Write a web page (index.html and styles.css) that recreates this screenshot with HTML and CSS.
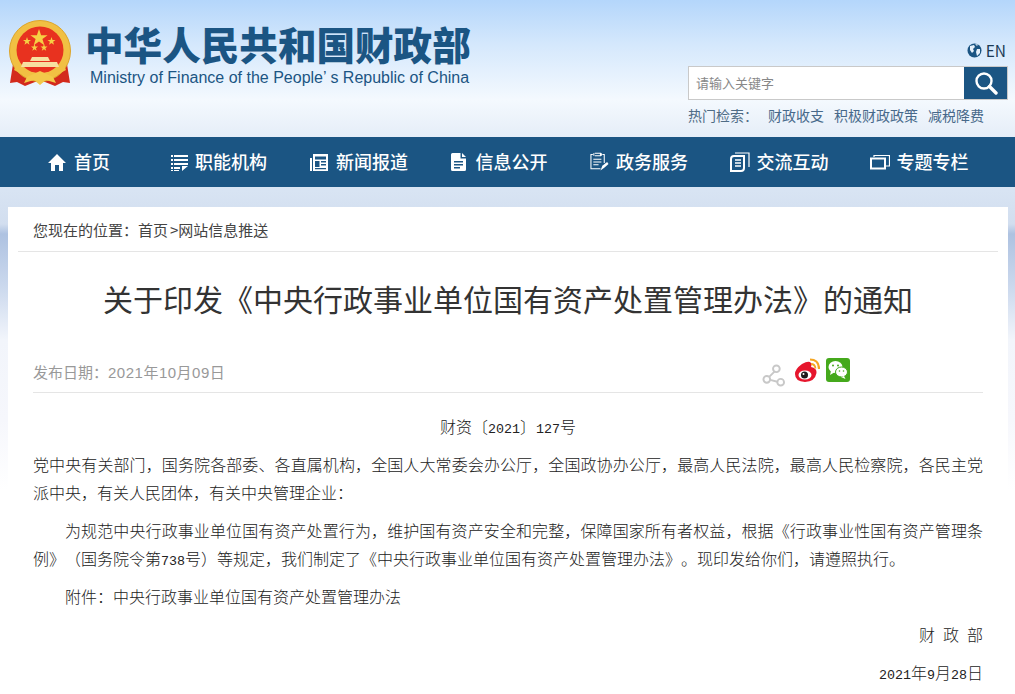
FILE: index.html
```html
<!DOCTYPE html>
<html lang="zh-CN">
<head>
    <meta charset="UTF-8">
    <meta name="viewport" content="width=device-width, initial-scale=1.0">
    <title>关于印发《中央行政事业单位国有资产处置管理办法》的通知</title>
    <link rel="stylesheet" href="styles.css">
</head>
<body>
    <header class="top">
        <div class="logo">
            <svg class="emblem" width="64" height="67" viewBox="0 0 64 67">
                <path d="M5 44 L2 63 L9 62 L17 66 L27 62 L37 62 L47 66 L55 62 L62 63 L59 44 Z" fill="#d32a1c"/>
                <circle cx="32" cy="31" r="30.500" fill="#f1c043" stroke="#dda52a"/>
                <circle cx="32" cy="30" r="23.500" fill="#e8321f"/>
                <polygon points="31,9 33.100,15.200 39.600,15.200 34.400,19 36.400,25.200 31,21.400 25.700,25.200 27.600,19 22.400,15.200 28.900,15.200" fill="#f6d044"/>
                <polygon points="19,17 20,20 23,20 20.600,21.800 21.500,24.700 19,23 16.500,24.700 17.400,21.800 15,20 18,20" fill="#f6d044"/>
                <polygon points="43.500,17 44.500,20 47.500,20 45.100,21.800 46,24.700 43.500,23 41,24.700 41.900,21.800 39.500,20 42.500,20" fill="#f6d044"/>
                <polygon points="26.500,24 27.400,26.600 30,26.600 27.900,28.200 28.700,30.700 26.500,29.200 24.300,30.700 25.100,28.200 23,26.600 25.600,26.600" fill="#f6d044"/>
                <polygon points="36,24 36.900,26.600 39.500,26.600 37.400,28.200 38.200,30.700 36,29.200 33.800,30.700 34.600,28.200 32.500,26.600 35.100,26.600" fill="#f6d044"/>
                <path d="M24 37 L40 37 L42 41 L22 41 Z M15 42 L49 42 L51 47 L13 47 Z" fill="#f7e0a0"/>
                <path d="M8 46 Q32 60 56 46 L58 50 Q32 66 6 50 Z" fill="#f1c043"/>
                <path d="M19 57 L32 51 L45 57 L48 63 L38 60 L32 65 L26 60 L16 63 Z" fill="#f3c94a"/>
            </svg>
            <div class="logo-text">
                <div class="logo-cn">中华人民共和国财政部</div>
                <div class="logo-en">Ministry of Finance of the People’ s Republic of China</div>
            </div>
        </div>
        <div class="top-right">
            <a class="lang">
                <svg width="15" height="15" viewBox="0 0 15 15">
                    <circle cx="7.500" cy="7.500" r="7" fill="#1b5583"/>
                    <path d="M3 3 L7 2 L8 4 L6 6 L7 8 L5 10 L3 7 Z M10 6 L13 6 L13 10 L10 13 L9 9 Z M8 1 L11 1.500 L10 3 Z" fill="#e6f0fa"/>
                </svg>
                EN
            </a>
            <form class="search">
                <input class="search-input" type="text" placeholder="请输入关键字">
                <button class="search-btn" type="button" aria-label="搜索">
                    <svg width="24" height="24" viewBox="0 0 24 24" fill="none" stroke="#fff">
                        <circle cx="10" cy="10" r="7.500" stroke-width="2.400"/>
                        <path d="M15.500 15.500 L22 22" stroke-width="3.400" stroke-linecap="round"/>
                    </svg>
                </button>
            </form>
            <div class="hot">
                <span class="hot-label">热门检索&#xFF1A;</span>
                <a>财政收支</a>
                <a>积极财政政策</a>
                <a>减税降费</a>
            </div>
        </div>
    </header>

    <nav class="nav">
        <a class="nav-item">
            <svg width="19" height="18" viewBox="0 0 19 18" fill="#fff"><path d="M9 1 L18 10 L15 10 L15 18 L11 18 L11 12 L7 12 L7 18 L3 18 L3 10 L0 10 Z"/></svg>
            <span>首页</span>
        </a>
        <a class="nav-item">
            <svg width="17" height="17" viewBox="0 0 17 17" fill="#fff"><path d="M0 1h2v2H0zM3 1h14v2H3zM0 5h2v2H0zM3 5h14v2H3zM0 9h2v2H0zM3 9h14v2H3zM0 13h2v2H0zM3 13h6v2H3zM0 16h2v1H0zM3 16h5v1H3zM11 12h6l-6 5z"/></svg>
            <span>职能机构</span>
        </a>
        <a class="nav-item">
            <svg width="19" height="18" viewBox="0 0 19 18" fill="#fff"><path d="M3 1h15v17H3zM0 5h2v13H0z"/><path d="M5 3.500h11v3H5zM5 8h4.500v6H5zM11 8h5v1.500h-5zM11 11h5v1.500h-5zM5 15h11v1.200H5z" fill="#1b5583"/></svg>
            <span>新闻报道</span>
        </a>
        <a class="nav-item">
            <svg width="18" height="18" viewBox="0 0 18 18" fill="#fff"><path d="M1.500 0H9.500V5.500H15V16.500Q15 18 13.500 18H1.500Q0 18 0 16.500V1.500Q0 0 1.500 0ZM11 0L15 4H11Z"/><path d="M3 8h9v1.400H3zM3 11h9v1.400H3zM3 14h6v1.400H3z" fill="#1b5583"/></svg>
            <span>信息公开</span>
        </a>
        <a class="nav-item">
            <svg width="19" height="20" viewBox="0 0 20 20" fill="none" stroke="#fff" stroke-width="1.100"><path d="M13 2H15V11M11 17H1V2H3"/><path d="M4 .8V3.500M12 .8V3.500M5 .8H11V3.500H5M3.500 7H12M3.500 10H12M3.500 13H9"/><path d="M11 19L13 14L18 10L19.500 12L15 16Z" fill="#fff" stroke="none"/></svg>
            <span>政务服务</span>
        </a>
        <a class="nav-item">
            <svg width="20" height="20" viewBox="0 0 20 20" fill="none" stroke="#fff"><path d="M1 7Q1 4 4 4H14V16Q14 19 11 19H1Z" stroke-width="2"/><path d="M5 1H19V15" stroke-width="1.200"/><path d="M5 8H11M5 11H11M5 14H11" stroke-width="1.400"/></svg>
            <span>交流互动</span>
        </a>
        <a class="nav-item">
            <svg width="20" height="18" viewBox="0 0 20 18" fill="none" stroke="#fff"><path d="M1 5.500H15V15.500H1Z" stroke-width="2"/><path d="M4 4V2.500H19.500V13H16" stroke-width="1.200"/></svg>
            <span>专题专栏</span>
        </a>
    </nav>

    <main class="card">
        <div class="crumb">您现在的位置&#xFF1A;<a>首页</a><span class="crumb-sep">&gt;</span><a>网站信息推送</a></div>
        <h1 class="title">关于印发《中央行政事业单位国有资产处置管理办法》的通知</h1>
        <div class="meta">
            <span class="date">发布日期&#xFF1A;<span class="date-val">2021年10月09日</span></span>
            <div class="share">
                <svg class="share-link" width="23" height="23" viewBox="0 0 24 24" fill="none" stroke="#c8c8c8" stroke-width="2">
                    <circle cx="15" cy="5" r="3.500"/><circle cx="5" cy="16" r="3.500"/><circle cx="19.500" cy="19" r="3.500"/>
                    <path d="M13 8L7.500 13.500M8.500 16.500L16 18.500"/>
                </svg>
                <svg width="25" height="24" viewBox="0 0 25 24">
                    <path d="M0 16Q0 11 7 6Q14 2 16 5Q17 7 16 9Q22 10 21.500 15Q20 23.500 10 24Q0 23.500 0 16Z" fill="#e6162d"/>
                    <ellipse cx="10" cy="17" rx="6.500" ry="4.500" fill="#fff"/>
                    <circle cx="9.500" cy="17" r="3.500" fill="#1c1c1c"/>
                    <circle cx="8.500" cy="16" r="1" fill="#fff"/>
                    <path d="M15 1.500Q24 1.500 24 11" fill="none" stroke="#f5a623" stroke-width="2.200"/>
                    <path d="M16 6Q20 6 20.500 10.500" fill="none" stroke="#f5a623" stroke-width="1.800"/>
                </svg>
                <svg width="24" height="24" viewBox="0 0 24 24">
                    <rect width="24" height="24" rx="3" fill="#45a91c"/>
                    <ellipse cx="9.500" cy="9" rx="7" ry="6" fill="#fff"/>
                    <path d="M5 13L4 17L9 14Z" fill="#fff"/>
                    <ellipse cx="15.500" cy="14" rx="6" ry="5" fill="#fff" stroke="#45a91c"/>
                    <path d="M18 18L19.500 21L15 19Z" fill="#fff"/>
                    <circle cx="7" cy="7.500" r="1" fill="#45a91c"/><circle cx="12" cy="7.500" r="1" fill="#45a91c"/>
                    <circle cx="13.500" cy="13" r=".8" fill="#45a91c"/><circle cx="17.500" cy="13" r=".8" fill="#45a91c"/>
                </svg>
            </div>
        </div>
        <article class="body">
            <p class="center">财资〔<span class="num">2021</span>〕<span class="num">127</span>号</p>
            <p>党中央有关部门&#xFF0C;国务院各部委、各直属机构&#xFF0C;全国人大常委会办公厅&#xFF0C;全国政协办公厅&#xFF0C;最高人民法院&#xFF0C;最高人民检察院&#xFF0C;各民主党派中央&#xFF0C;有关人民团体&#xFF0C;有关中央管理企业&#xFF1A;</p>
            <p class="indent">为规范中央行政事业单位国有资产处置行为&#xFF0C;维护国有资产安全和完整&#xFF0C;保障国家所有者权益&#xFF0C;根据《行政事业性国有资产管理条例》&#xFF08;国务院令第<span class="num">738</span>号&#xFF09;等规定&#xFF0C;我们制定了《中央行政事业单位国有资产处置管理办法》。现印发给你们&#xFF0C;请遵照执行。</p>
            <p class="indent">附件&#xFF1A;中央行政事业单位国有资产处置管理办法</p>
            <p class="right sign">财 政 部</p>
            <p class="right"><span class="num">2021</span>年<span class="num">9</span>月<span class="num">28</span>日</p>
        </article>
    </main>
</body>
</html>
```

FILE: styles.css
```css
* { box-sizing: border-box; }
body {
    margin: 0;
    height: 694px;
    overflow: hidden;
    font-family: "Noto Sans CJK SC", sans-serif;
    color: #333;
    text-spacing-trim: space-all;
    background: linear-gradient(to bottom, #b4d6fb 0, #d5e8fc 45px, #f4f9fe 100px, #e6eef8 135px, #d8e4f3 190px, #d2deef 224px, #aec2e1 234px, #cddaee 290px, #f2f5fb 340px, #f6f7fc 420px, #fff 490px);
}
a { color: inherit; text-decoration: none; }

/* Header */
.top { height: 137px; display: flex; justify-content: space-between; }
.logo { display: flex; padding: 20px 0 0 8px; }
.logo-text { margin-left: 13px; }
.logo-cn { font-size: 38.600px; font-weight: 900; line-height: 46px; color: #1b5583; white-space: nowrap; }
.logo-en { margin: 3px 0 0 5px; font-family: "Liberation Sans", sans-serif; font-size: 16px; line-height: 18px; color: #1b5583; white-space: nowrap; }

.top-right { width: 320px; margin-right: 7px; padding-top: 41px; }
.lang { display: flex; align-items: center; justify-content: flex-end; gap: 4px; height: 18px; margin-right: 2px; font-size: 15.500px; color: #1b3a55; }
.search { display: flex; height: 34px; margin-top: 7px; border: 1px solid #c9c9c9; background: #fff; }
.search-input { flex: 1; min-width: 0; border: 0; padding: 0 7px 2px; font-family: inherit; font-size: 13px; background: none; outline: none; }
.search-input::placeholder { color: #888; }
.search-btn { display: flex; align-items: center; justify-content: center; width: 43px; padding: 0; border: 0; background: #1b5583; }
.hot { display: flex; gap: 10px; margin-top: 5px; font-size: 14px; line-height: 20px; color: #47698a; }
.hot-label { width: 70px; color: #4f6c85; }

/* Nav */
.nav { display: flex; height: 50px; padding-left: 9px; background: #1b5583; }
.nav-item { display: flex; align-items: center; justify-content: center; gap: 7px; width: 140px; color: #fff; font-size: 18px; font-weight: 500; }
.nav-item span { padding-bottom: 3px; }

/* Card */
.card { width: 1000px; margin: 20px 0 0 8px; padding: 0 10px; background: #fff; }
.crumb { height: 45px; padding: 13px 0 0 15px; font-size: 15px; line-height: 20px; color: #444; border-bottom: 1px solid #e5e5e5; }
.crumb-sep { margin-left: 2px; }
.title { margin: 0; padding-top: 24px; height: 98px; text-align: center; font-size: 30px; font-weight: 400; line-height: 44px; color: #333; }
.meta { display: flex; justify-content: space-between; height: 43px; margin: 0 15px; border-bottom: 1px solid #e5e5e5; }
.date { padding-top: 12px; font-size: 15px; line-height: 20px; color: #999; }
.date-val { font-family: "Liberation Sans", "Noto Sans CJK SC", sans-serif; letter-spacing: .5px; }
.share { display: flex; align-items: flex-start; gap: 6px; margin-right: 133px; padding-top: 8px; }
.share-link { margin: 6px 4px 0 0; }

.body { padding: 19px 15px 0; font-size: 16px; line-height: 28px; font-weight: 300; color: #222; }
.body p { margin: 0 0 10px; text-align: justify; }
.body .center { text-align: center; }
.body .right { text-align: right; }
.body .indent { text-indent: 2em; }
.body .sign { word-spacing: 4.500px; }
.num { font-family: "Liberation Mono", monospace; font-size: 13.330px; line-height: 1; }
```
